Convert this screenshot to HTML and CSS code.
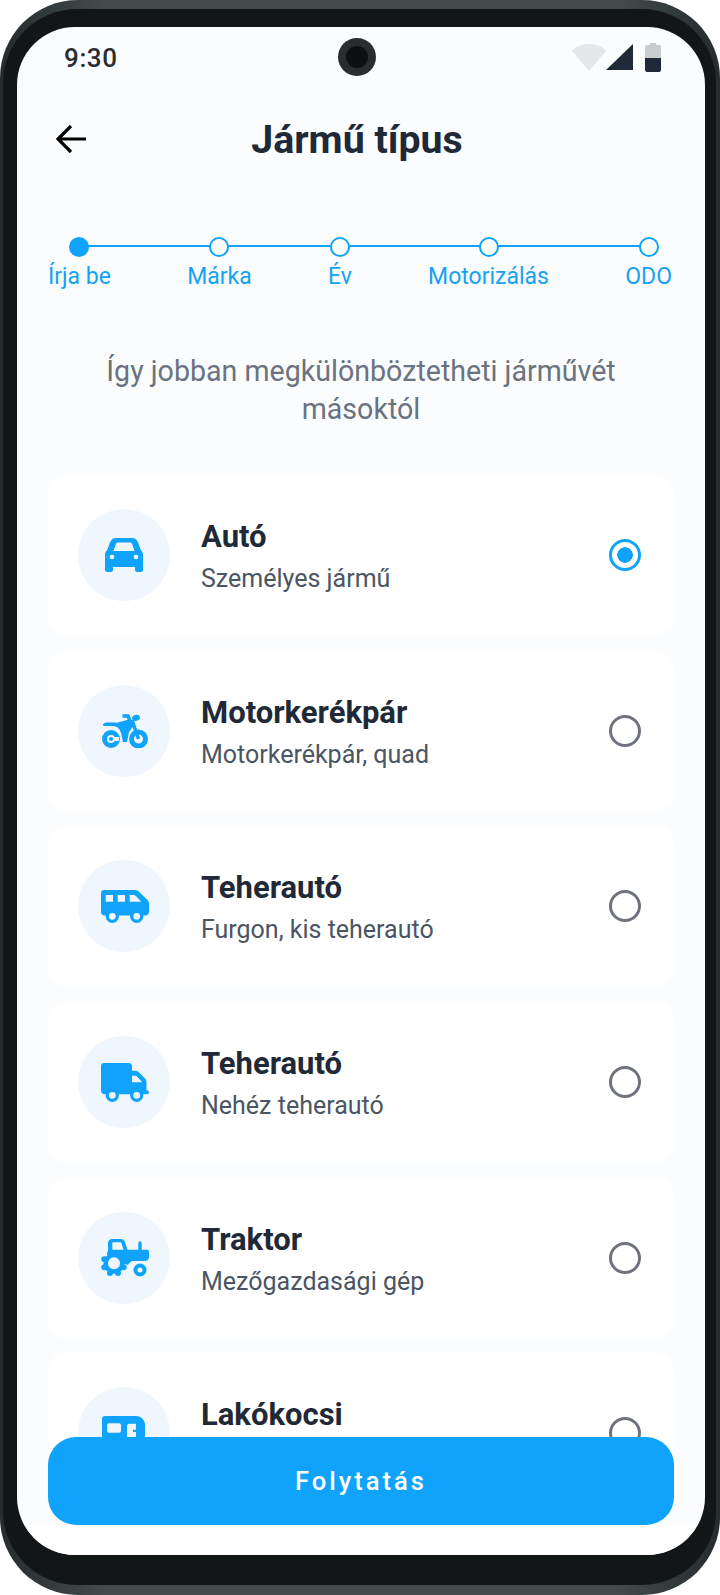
FILE: index.html
```html
<!DOCTYPE html>
<html lang="hu">
<head>
<meta charset="utf-8">
<title>Jármű típus</title>
<link rel="stylesheet" href="styles.css">
</head>
<body>
<div class="phone">
  <div class="bezel">
    <main class="screen">
      <div class="camera"><div class="lens"></div></div>
      <div class="status">
        <span class="time">9:30</span>
        <div class="status-icons">
          <svg class="ic-wifi" width="34" height="28" viewBox="0 0 34 28"><path d="M0 8C4 3 10 1 17 1s13 2 17 7L17 28z" fill="#e6e7e9"/></svg>
          <svg class="ic-signal" width="28" height="28" viewBox="0 0 28 28"><path d="M27 1v26H0z" fill="#1f2937"/></svg>
          <svg class="ic-batt" width="16" height="29" viewBox="0 0 16 29"><path d="M5 0h6v2h3c1 0 2 1 2 2v11H0V4c0-1 1-2 2-2h3z" fill="#c9cbce"/><path d="M0 15h16v12c0 1-1 2-2 2H2c-1 0-2-1-2-2z" fill="#1f2937"/></svg>
        </div>
      </div>
      <header class="top">
        <svg class="back" width="32" height="30" viewBox="0 0 32 30"><path d="M31 15H3M16 2 3 15l13 13" fill="none" stroke="#000" stroke-width="3.2"/></svg>
        <h1>Jármű típus</h1>
      </header>
      <div class="stepper">
        <div class="line"></div>
        <div class="step"><i class="dot on"></i><span>Írja be</span></div>
        <div class="step"><i class="dot"></i><span>Márka</span></div>
        <div class="step"><i class="dot"></i><span>Év</span></div>
        <div class="step"><i class="dot"></i><span>Motorizálás</span></div>
        <div class="step"><i class="dot"></i><span>ODO</span></div>
      </div>
      <p class="lead">Így jobban megkülönböztetheti járművét<br>másoktól</p>
      <section class="list">
        <div class="card">
          <div class="badge"><svg width="38" height="34" viewBox="0 0 38 34"><path class="b" d="M11 0h16c3 0 5 2 6 4.500l3 8c1.300 1 2 2.500 2 4.500v15c0 1-1 2-2 2h-4c-1 0-2-1-2-2v-3H8v3c0 1-1 2-2 2H2c-1 0-2-1-2-2V17c0-2 .7-3.500 2-4.500l3-8C6 2 8 0 11 0z"/><path class="c" d="M8.500 13l2.300-6.800C11.200 5 12 4.500 13 4.500h12c1 0 1.800.5 2.200 1.700L29.500 13z"/><circle class="c" cx="7" cy="19" r="2.300"/><circle class="c" cx="31" cy="19" r="2.300"/></svg></div>
          <div class="txt"><h2>Autó</h2><p>Személyes jármű</p></div>
          <i class="radio on"></i>
        </div>
        <div class="card">
          <div class="badge"><svg class="nudge" width="46" height="34" viewBox="0 0 46 34"><circle class="ring" cx="9" cy="25" r="6.500"/><path class="c" d="M10 23h7v4h-7z"/><circle class="b" cx="9" cy="25" r="2"/><circle class="ring" cx="36.500" cy="25" r="7"/><path class="line-b" d="M30 6l6.500 19"/><path class="b" d="M14 9l11-3h5l2 5-5 7-2 10h-4l-2-9c-1.300-4.500-4-7-9-7H3c-1.500 0-2.300-.7-2-1.500C1.700 8.800 4 8.500 6 8.500h8z"/><path class="line-b" d="M20.500 2H26l2 5"/><ellipse class="b" cx="34" cy="3.800" rx="4" ry="3" transform="rotate(-15 34 3.800)"/></svg></div>
          <div class="txt"><h2>Motorkerékpár</h2><p>Motorkerékpár, quad</p></div>
          <i class="radio"></i>
        </div>
        <div class="card">
          <div class="badge"><svg class="nudge" width="48" height="33" viewBox="0 0 48 33"><path class="b" d="M3 0h31c1.500 0 2.700.5 3.700 1.500L46.500 10c1 1 1.500 2.200 1.500 3.700V22c0 2-1.500 3.500-3.500 3.500H3.500C1.500 25.500 0 24 0 22V3c0-2 1.300-3 3-3z"/><path class="c" d="M4.700 5H12v6.700H4.700zM16.700 5H24v6.700h-7.300zM28.700 5h3.800c1 0 1.700.4 2.300 1l5.500 5.700H28.700z"/><circle class="b" cx="11.300" cy="26.300" r="6.600"/><circle class="b" cx="35.700" cy="26.300" r="6.600"/><circle class="c" cx="11.300" cy="26.300" r="3.400"/><circle class="c" cx="35.700" cy="26.300" r="3.400"/></svg></div>
          <div class="txt"><h2>Teherautó</h2><p>Furgon, kis teherautó</p></div>
          <i class="radio"></i>
        </div>
        <div class="card">
          <div class="badge"><svg class="nudge" width="48" height="39" viewBox="0 0 48 39"><path class="b" d="M3 0h25c1.500 0 3 1.300 3 3v4.700h3c1.500 0 2.800.5 3.800 1.500l6 6c1 1 1.700 2.300 1.700 3.800v8.200H46c1.200 0 2 .8 2 2s-.8 2-2 2H4c-2.500 0-4-1.500-4-4V3c0-1.700 1.300-3 3-3z"/><path class="c" d="M31 12.700h3c1 0 1.700.4 2.300 1l5 5.600H31z"/><circle class="b" cx="11.300" cy="32.300" r="6.600"/><circle class="b" cx="35.700" cy="32.300" r="6.600"/><circle class="c" cx="11.300" cy="32.300" r="3.400"/><circle class="c" cx="35.700" cy="32.300" r="3.400"/></svg></div>
          <div class="txt"><h2>Teherautó</h2><p>Nehéz teherautó</p></div>
          <i class="radio"></i>
        </div>
        <div class="card">
          <div class="badge"><svg class="nudge" width="48" height="38" viewBox="0 0 48 38"><path class="b" d="M7 15V4c0-2.500 2-4 4-4h9c2 0 3.300 1 4 3l2.500 7.700h10.800V4a1.700 1.700 0 0 1 3.400 0v6.700H46c1.500 0 2 1 2 2V18c0 2.500-2 4-4 4H33c-3 0-5 2-6 4l-3-1z"/><path class="c" d="M11.300 10.700V4.500c0-.7.500-1.200 1.200-1.200h6.500c.8 0 1.300.4 1.600 1.200l2 6.200z"/><circle class="b" cx="13" cy="24.300" r="10.500"/><g class="b"><circle cx="3.300" cy="20.300" r="3"/><circle cx="3.300" cy="28.300" r="3"/><circle cx="22.700" cy="20.300" r="3"/><circle cx="22.700" cy="28.300" r="3"/><circle cx="9" cy="14.600" r="3"/><circle cx="17" cy="14.600" r="3"/><circle cx="9" cy="34" r="3"/><circle cx="17" cy="34" r="3"/></g><circle class="c" cx="13" cy="24.300" r="6"/><circle class="ring-s" cx="39" cy="31" r="4.500"/></svg></div>
          <div class="txt"><h2>Traktor</h2><p>Mezőgazdasági gép</p></div>
          <i class="radio"></i>
        </div>
        <div class="card">
          <div class="badge"><svg class="pull" width="43" height="34" viewBox="0 0 43 34"><path class="b" d="M3 0h31c5 0 9 4 9 9v25H0V3c0-2 1-3 3-3z"/><rect class="c" x="5" y="7.300" width="14" height="9.400" rx="2"/><path class="c" d="M27 7.700h7v6h-3v2.300h3V34h-9V9.700c0-1 1-2 2-2z"/></svg></div>
          <div class="txt"><h2>Lakókocsi</h2><p>Lakóautó</p></div>
          <i class="radio"></i>
        </div>
      </section>
      <div class="footer"><button class="cta">Folytatás</button></div>
    </main>
  </div>
</div>
</body>
</html>
```
FILE: styles.css
```css
html, body { margin: 0; padding: 0; background: #fff; }
body { width: 720px; height: 1595px; overflow: hidden; font-family: Roboto, "Liberation Sans", sans-serif; }
.phone { box-sizing: border-box; width: 720px; height: 1595px; padding: 9px 4px 10px 3px; border-radius: 78px; background: linear-gradient(90deg, #262c2e 0, #424a4c 14%, #424a4c 86%, #262c2e 100%); }
.bezel { box-sizing: border-box; height: 100%; padding: 18px 11px 30px 14px; border-radius: 74px; background: #131616; }
.screen { position: relative; height: 100%; overflow: hidden; border-radius: 58px; background: #fafcfe; }
.camera { position: absolute; left: 321px; top: 11px; width: 38px; height: 38px; border-radius: 50%; background: #2a2c2e; display: flex; align-items: center; justify-content: center; }
.lens { width: 22px; height: 22px; border-radius: 50%; background: #0d0f10; }
.status { display: flex; justify-content: space-between; align-items: center; height: 60px; padding: 0 44px 0 47px; }
.time { font-size: 26px; font-weight: 500; color: #2b2d31; letter-spacing: .6px; margin-top: 1px; }
.status-icons { display: flex; align-items: center; }
.ic-batt { margin-left: 11px; }
.top { position: relative; display: flex; justify-content: center; align-items: center; height: 104px; }
.back { position: absolute; left: 38px; top: 37px; }
.top h1 { margin: 2px 0 0 -8px; font-size: 39.300px; font-weight: 700; color: #1f2937; }
.stepper { position: relative; display: flex; justify-content: space-between; margin: 46px 33px 0 31px; }
.line { position: absolute; left: 31px; right: 22px; top: 8px; height: 2px; background: #0fa3fb; }
.step { position: relative; display: flex; flex-direction: column; align-items: center; }
.step span { margin-top: 6px; font-size: 23px; line-height: 28px; color: #16a2f2; }
.dot { box-sizing: border-box; width: 20px; height: 20px; border-radius: 50%; border: 2px solid #0fa3fb; background: #fff; }
.dot.on { background: #0fa3fb; }
.lead { margin: 62px 31px 0; text-align: center; font-size: 28.600px; line-height: 37.500px; color: #6b7280; }
.list { display: flex; flex-direction: column; gap: 15.700px; margin: 47px 31px 0; }
.card { display: flex; align-items: center; height: 160px; flex: none; box-sizing: border-box; padding: 0 33px 0 30px; border-radius: 20px; background: #fff; box-shadow: 0 0 8px rgba(255, 255, 255, .9); }
.badge { display: flex; align-items: center; justify-content: center; flex: none; width: 92px; height: 92px; border-radius: 50%; background: #eff6fe; margin-right: 31px; }
.nudge { margin-left: 2px; }
.pull { margin-right: 2px; }
.b { fill: #0fa3fb; }
.c { fill: #eff6fe; }
.ring { fill: none; stroke: #0fa3fb; stroke-width: 5; }
.ring-s { fill: none; stroke: #0fa3fb; stroke-width: 4; }
.line-b { fill: none; stroke: #0fa3fb; stroke-width: 3.500; }
.txt { flex: 1; padding-top: 2px; }
.txt h2 { margin: 0; font-size: 31px; line-height: 38px; font-weight: 700; color: #1f2937; }
.txt p { margin: 8px 0 0; font-size: 25px; line-height: 30px; color: #4b5563; }
.radio { box-sizing: border-box; flex: none; width: 32px; height: 32px; border-radius: 50%; border: 3px solid #6f737d; }
.radio.on { border-color: #0fa3fb; background: radial-gradient(circle, #0fa3fb 0 7.500px, transparent 8px); }
.footer { position: absolute; left: 0; right: 0; bottom: 0; display: flex; justify-content: center; padding: 0 31px 30px; background: linear-gradient(transparent 88px, #fff 88px); }
.cta { width: 100%; height: 88px; border: 0; border-radius: 28px; background: #0fa3fb; color: #fff; font-family: inherit; font-size: 25.500px; font-weight: 500; letter-spacing: 3px; }
```
